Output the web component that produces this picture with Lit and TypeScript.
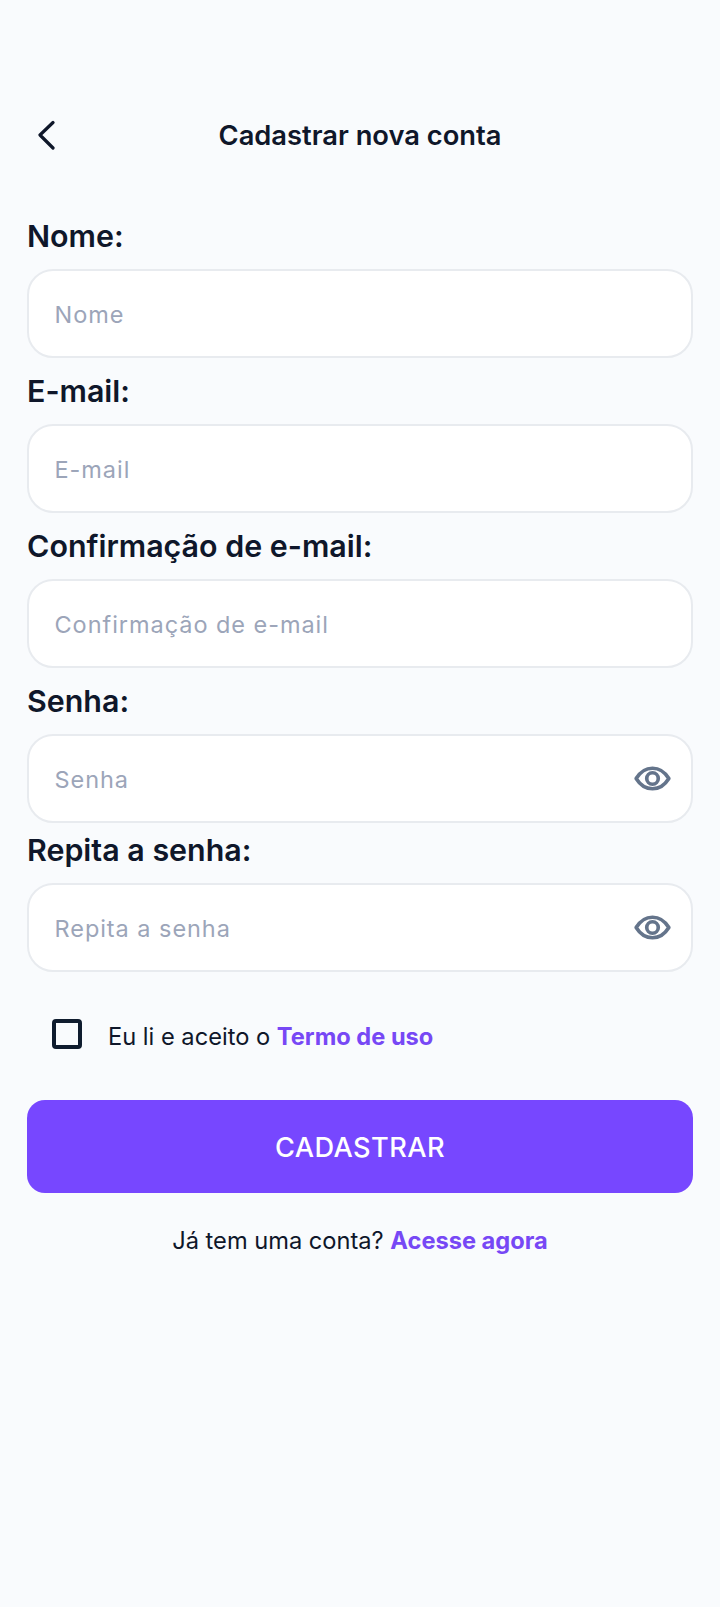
import { LitElement, html, css } from "lit";
import { customElement } from "lit/decorators.js";

const eye = html`<svg class="eye" viewBox="0 0 38 26" width="37" height="25" fill="none" stroke="#64748b" stroke-width="3.8">
  <path d="M2 13C6 6.5 12 2.3 19 2.3S32 6.5 36 13C32 19.5 26 23.7 19 23.7S6 19.5 2 13Z" stroke-linejoin="round"/>
  <circle cx="19" cy="13" r="6"/>
</svg>`;

@customElement("app-root")
export class AppRoot extends LitElement {
  static styles = css`
    :host { display: block; min-height: 1607px; background: #f9fbfd; font-family: Inter, "Liberation Sans", sans-serif; color: #0f172a; }
    .page { padding: 105px 27px 0; }
    .header { position: relative; height: 60px; display: flex; align-items: center; justify-content: center; font-size: 27.3px; font-weight: 600; }
    .back { position: absolute; left: 9px; top: 15px; }
    .fields { padding-top: 46px; }
    .label { display: block; height: 48px; line-height: 50px; font-size: 30.4px; font-weight: 600; margin-bottom: 10px; }
    .field { display: flex; align-items: center; justify-content: space-between; height: 89px; box-sizing: border-box; padding: 0 20px 0 25.5px; background: #fff; border: 2px solid #e8ebef; border-radius: 26px; margin-bottom: 8px; font-size: 23.5px; letter-spacing: 0.95px; color: #9ca5b9; }
    .text { margin-top: 2px; }
    .field.pw { margin-bottom: 2px; }
    .field.last { margin-bottom: 0; }
    .terms { display: flex; align-items: center; height: 128px; padding-left: 25px; gap: 26px; font-size: 23.65px; }
    .box { width: 30px; height: 30px; box-sizing: border-box; border: 4px solid #0f1c2e; border-radius: 4px; margin-top: -4px; }
    a { color: #7748f5; font-weight: 700; text-decoration: none; }
    .btn { height: 93px; padding-top: 1px; box-sizing: border-box; display: flex; align-items: center; justify-content: center; background: #7747ff; color: #fff; border-radius: 18px; font-size: 27.2px; font-weight: 540; letter-spacing: 0.4px; }
    .foot { margin-top: 30px; text-align: center; font-size: 23.65px; line-height: 36px; }
  `;

  private field(name: string, cls = "", icon: unknown = null) {
    return html`<label class="label">${name}:</label><div class="field ${cls}"><span class="text">${name}</span>${icon}</div>`;
  }

  render() {
    return html`<div class="page">
      <div class="header">
        <svg class="back" width="22" height="30" viewBox="0 0 22 30" fill="none" stroke="#0f172a" stroke-width="3.2" stroke-linecap="round" stroke-linejoin="round"><path d="M17 2.5 4 15 17 28"/></svg>
        Cadastrar nova conta
      </div>
      <div class="fields">
        ${this.field("Nome")}
        ${this.field("E-mail")}
        ${this.field("Confirmação de e-mail")}
        ${this.field("Senha", "pw", eye)}
        ${this.field("Repita a senha", "last", eye)}
      </div>
      <div class="terms"><div class="box"></div><span>Eu li e aceito o <a>Termo de uso</a></span></div>
      <div class="btn">CADASTRAR</div>
      <div class="foot">Já tem uma conta? <a>Acesse agora</a></div>
    </div>`;
  }
}
